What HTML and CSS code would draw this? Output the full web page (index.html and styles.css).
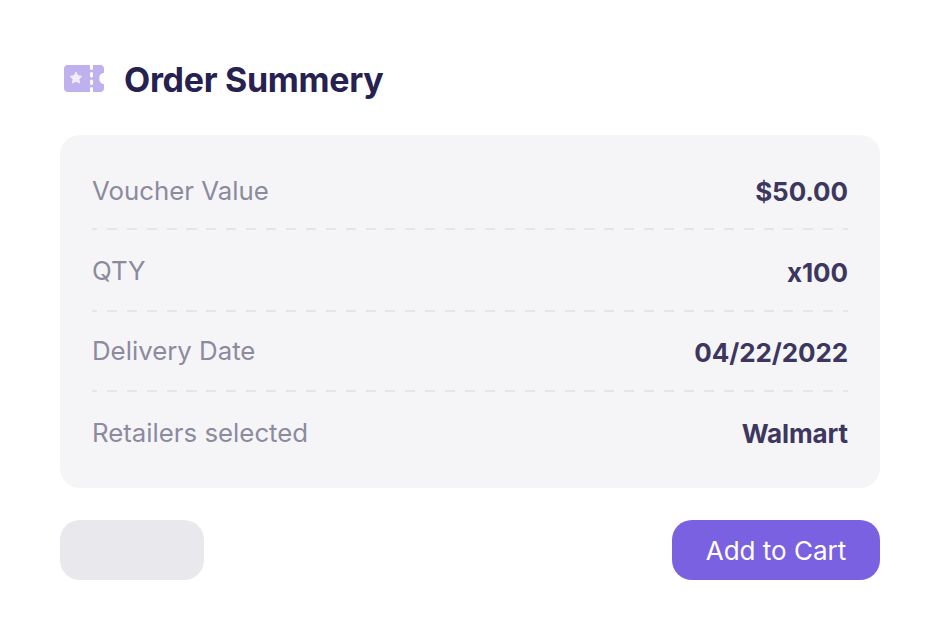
FILE: index.html
```html
<!DOCTYPE html>
<html lang="en">
<head>
<meta charset="utf-8">
<title>Order Summery</title>
<link rel="stylesheet" href="styles.css">
</head>
<body>
<main class="page">
  <header class="head">
    <svg class="icon" viewBox="0 0 40 27" width="40" height="27" aria-hidden="true">
      <path fill="#bfb0ee" d="M4 0H26V3.500a1.400 1.400 0 0 0 3 0V0H36a4 4 0 0 1 4 4V7.800a5.800 5.800 0 0 0 0 11.400V23a4 4 0 0 1-4 4H29V23.500a1.400 1.400 0 0 0-3 0V27H4a4 4 0 0 1-4-4V4a4 4 0 0 1 4-4ZM26 8.500V11a1.400 1.400 0 0 0 3 0V8.500a1.500 1.500 0 0 0-3 0ZM26 16v2.500a1.500 1.500 0 0 0 3 0V16a1.500 1.500 0 0 0-3 0Z"/>
      <path fill="#f1edfb" stroke="#f1edfb" stroke-width="1" stroke-linejoin="round" d="M12 7l1.800 3.700 4 .6-2.900 2.800.7 4-3.600-1.900-3.600 1.900.7-4-2.900-2.800 4-.6Z"/>
    </svg>
    <h1 class="title">Order Summery</h1>
  </header>
  <section class="card">
    <div class="row"><span class="label">Voucher Value</span><span class="value">$50.00</span></div>
    <div class="rule rule-first"></div>
    <div class="row row-raised"><span class="label">QTY</span><span class="value">x100</span></div>
    <div class="rule rule-mid"></div>
    <div class="row row-raised"><span class="label">Delivery Date</span><span class="value">04/22/2022</span></div>
    <div class="rule"></div>
    <div class="row"><span class="label">Retailers selected</span><span class="value">Walmart</span></div>
  </section>
  <footer class="actions">
    <button class="btn btn-ghost" type="button" aria-label="Back"></button>
    <button class="btn btn-primary" type="button">Add to Cart</button>
  </footer>
</main>
</body>
</html>
```
FILE: styles.css
```css
* { box-sizing: border-box; }
html, body { margin: 0; background: #fff; }
body { width: 940px; height: 640px; overflow: hidden; font-family: Inter, "Liberation Sans", sans-serif; }
.page { padding: 60px 60px 0; display: flex; flex-direction: column; }
.head { display: flex; align-items: center; gap: 20px; height: 40px; padding-left: 4px; margin-bottom: 35px; }
.icon { flex: none; margin-top: -3px; }
.title { margin: 0; font-size: 34px; font-weight: 650; letter-spacing: -0.3px; line-height: 40px; color: #262150; }
.card { background: #f5f5f8; border-radius: 20px; padding: 36px 32px 0; height: 353px; }
.row { display: flex; justify-content: space-between; align-items: center; height: 40px; }
.row-raised .label { margin-bottom: 3px; }
.rule { height: 2px; margin: 18px 0 21px; background: repeating-linear-gradient(90deg, #e4e4e9 0 10px, transparent 10px 19.900px) -5px 0; }
.rule-first { margin: 17px 0 22px; }
.rule-mid { margin: 18px 0 20px; }
.label { font-size: 25.800px; font-weight: 400; margin-bottom: 2px; color: #8c8a9e; }
.value { font-size: 26px; font-weight: 650; letter-spacing: -0.1px; color: #3d3760; }
.actions { display: flex; justify-content: space-between; margin-top: 32px; }
.btn { border: 0; height: 60px; border-radius: 20px; font-family: inherit; padding: 0; }
.btn-ghost { width: 144px; background: #e9e9ed; }
.btn-primary { width: 208px; background: #7a61e2; color: #fff; font-size: 26px; font-weight: 400; }
```
